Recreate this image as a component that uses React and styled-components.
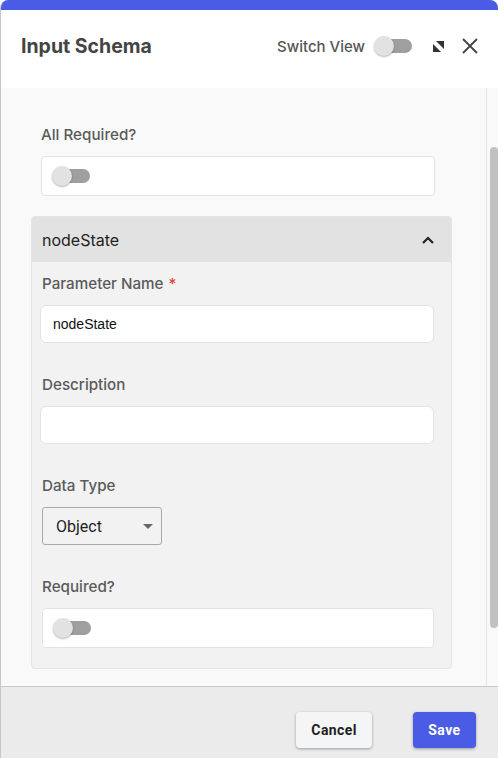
import styled, { createGlobalStyle } from "styled-components";

const Global = createGlobalStyle`
    html, body {
        margin: 0;
        padding: 0;
        background: #ffffff;
    }
    * { box-sizing: border-box; }
`;

const Modal = styled.div`
    width: 498px;
    height: 758px;
    display: flex;
    flex-direction: column;
    border-left: 1px solid #c6c6c6;
    border-top-left-radius: 8px;
    border-top-right-radius: 8px;
    overflow: hidden;
    font-family: Inter, "Noto Sans", sans-serif;
`;
const TopBar = styled.div`
    height: 10px;
    background: #4a5be6;
    flex-shrink: 0;
`;
const Header = styled.div`
    height: 78px;
    display: flex;
    align-items: center;
    padding: 0 20px 6px 20px;
    background: #ffffff;
    flex-shrink: 0;
`;
const Title = styled.h2`
    margin: 0;
    flex: 1;
    font-size: 19.5px;
    font-weight: 700;
    color: #444444;
`;
const HeaderTools = styled.div`
    display: flex;
    align-items: center;
`;
const SwitchLabel = styled.span`
    font-size: 15px;
    font-weight: 500;
    color: #555555;
    margin-right: 9px;
`;
const IconButton = styled.button`
    border: none;
    background: none;
    padding: 0;
    display: flex;
    align-items: center;
    justify-content: center;
    margin-left: ${(p) => p.$gap}px;
    cursor: pointer;
`;

const ToggleWrap = styled.span`
    position: relative;
    display: inline-block;
    width: 38px;
    height: 20px;
`;
const ToggleTrack = styled.span`
    position: absolute;
    left: 4px;
    right: 0;
    top: 3px;
    height: 14px;
    border-radius: 7px;
    background: #9f9f9f;
`;
const ToggleThumb = styled.span`
    position: absolute;
    left: 0;
    top: 0;
    width: 20px;
    height: 20px;
    border-radius: 50%;
    background: #e2e2e2;
    box-shadow: 0 1px 2px rgba(0, 0, 0, 0.3);
`;

const Body = styled.div`
    flex: 1;
    display: flex;
    background: #f9f9f9;
    min-height: 0;
`;
const Content = styled.div`
    flex: 1;
    padding: 38px 34px 0 30px;
`;
const Scrollbar = styled.div`
    width: 12px;
    border-left: 1px solid #e6e6e6;
    display: flex;
    flex-direction: column;
    padding: 59px 0 0 3px;
`;
const Thumb = styled.div`
    width: 8px;
    height: 481px;
    border-radius: 4px;
    background: #c1c1c1;
`;

const Section = styled.div`
    padding-left: ${(p) => p.$indent || 0}px;
`;
const Label = styled.div`
    font-size: 15.2px;
    font-weight: 500;
    color: #5a5a5a;
    margin-bottom: 12px;
    line-height: 18px;
`;
const Star = styled.span`
    color: #e8442f;
    margin-left: 5px;
`;
const SwitchBox = styled.div`
    height: 40px;
    display: flex;
    align-items: center;
    padding-left: 10px;
    background: #ffffff;
    border: 1px solid #e3e3e3;
    border-radius: 4px;
    width: ${(p) => p.$width}px;
`;

const Accordion = styled.div`
    margin-top: 20px;
    border: 1px solid #e4e4e4;
    border-radius: 4px;
    background: #f2f2f2;
    overflow: hidden;
`;
const AccordionHead = styled.div`
    height: 45px;
    display: flex;
    align-items: center;
    justify-content: space-between;
    padding: 0 17px 0 10px;
    background: #e2e2e2;
    font-size: 16px;
    color: #222222;
`;
const AccordionBody = styled.div`
    padding: 13px 17px 20px 8px;
    display: flex;
    flex-direction: column;
    gap: 33px;
`;
const Field = styled.div`
    display: flex;
    flex-direction: column;
    padding-left: ${(p) => p.$indent || 0}px;
`;
const TextInput = styled.input`
    height: 38px;
    width: 394px;
    margin-left: -2px;
    border: 1px solid #e3e3e3;
    border-radius: 6px;
    background: #ffffff;
    padding: 0 12px;
    font-family: "Liberation Sans", Arial, sans-serif;
    font-size: 14px;
    color: #111111;
    outline: none;
`;
const Select = styled.div`
    width: 120px;
    height: 38px;
    border: 1px solid #a9a9a9;
    border-radius: 3px;
    display: flex;
    align-items: center;
    justify-content: space-between;
    padding: 0 8px 0 13px;
    font-family: Roboto, sans-serif;
    font-size: 16px;
    color: #222222;
`;
const Caret = styled.span`
    width: 0;
    height: 0;
    border-left: 5px solid transparent;
    border-right: 5px solid transparent;
    border-top: 5px solid #666666;
`;

const Footer = styled.div`
    height: 72px;
    flex-shrink: 0;
    display: flex;
    align-items: center;
    justify-content: flex-end;
    gap: 41px;
    padding: 15px 22px 0 0;
    background: #ebebeb;
    border-top: 1px solid #c8c8c8;
`;
const Button = styled.button`
    height: 36px;
    padding: 0 ${(p) => (p.$primary ? 15.5 : 15)}px;
    border: none;
    border-radius: 4px;
    font-family: Roboto, sans-serif;
    font-size: 14px;
    font-weight: 700;
    letter-spacing: 0.4px;
    color: ${(p) => (p.$primary ? "#ffffff" : "#1e1e1e")};
    background: ${(p) => (p.$primary ? "#4a5be6" : "#f4f5f7")};
    box-shadow: 0 1px 3px rgba(0, 0, 0, 0.35);
    cursor: pointer;
`;

function Toggle() {
    return (
        <ToggleWrap>
            <ToggleTrack />
            <ToggleThumb />
        </ToggleWrap>
    );
}

function ShrinkIcon() {
    return (
        <svg width="11" height="11" viewBox="0 0 11 11" fill="#333">
            <path d="M3 0H11V8Z" />
            <path d="M0 3V11H8Z" />
        </svg>
    );
}

function CloseIcon() {
    return (
        <svg width="16" height="16" viewBox="0 0 16 16" stroke="#444" strokeWidth="1.8" fill="none">
            <path d="M1 1L15 15M15 1L1 15" />
        </svg>
    );
}

function ChevronUp() {
    return (
        <svg width="12" height="8" viewBox="0 0 12 8" fill="none" stroke="#222" strokeWidth="2.2">
            <path d="M1 7L6 2L11 7" />
        </svg>
    );
}

export default function App() {
    return (
        <>
            <Global />
            <Modal>
                <TopBar />
                <Header>
                    <Title>Input Schema</Title>
                    <HeaderTools>
                        <SwitchLabel>Switch View</SwitchLabel>
                        <Toggle />
                        <IconButton $gap={21}><ShrinkIcon /></IconButton>
                        <IconButton $gap={18}><CloseIcon /></IconButton>
                    </HeaderTools>
                </Header>
                <Body>
                    <Content>
                        <Section $indent={10}>
                            <Label>All Required?</Label>
                            <SwitchBox $width={394}><Toggle /></SwitchBox>
                        </Section>
                        <Accordion>
                            <AccordionHead>
                                nodeState
                                <ChevronUp />
                            </AccordionHead>
                            <AccordionBody>
                                <Field $indent={2}>
                                    <Label>Parameter Name<Star>*</Star></Label>
                                    <TextInput defaultValue="nodeState" />
                                </Field>
                                <Field $indent={2}>
                                    <Label>Description</Label>
                                    <TextInput defaultValue="" />
                                </Field>
                                <Field $indent={2}>
                                    <Label>Data Type</Label>
                                    <Select>
                                        Object
                                        <Caret />
                                    </Select>
                                </Field>
                                <Field $indent={2}>
                                    <Label>Required?</Label>
                                    <SwitchBox $width={392}><Toggle /></SwitchBox>
                                </Field>
                            </AccordionBody>
                        </Accordion>
                    </Content>
                    <Scrollbar>
                        <Thumb />
                    </Scrollbar>
                </Body>
                <Footer>
                    <Button>Cancel</Button>
                    <Button $primary>Save</Button>
                </Footer>
            </Modal>
        </>
    );
}
